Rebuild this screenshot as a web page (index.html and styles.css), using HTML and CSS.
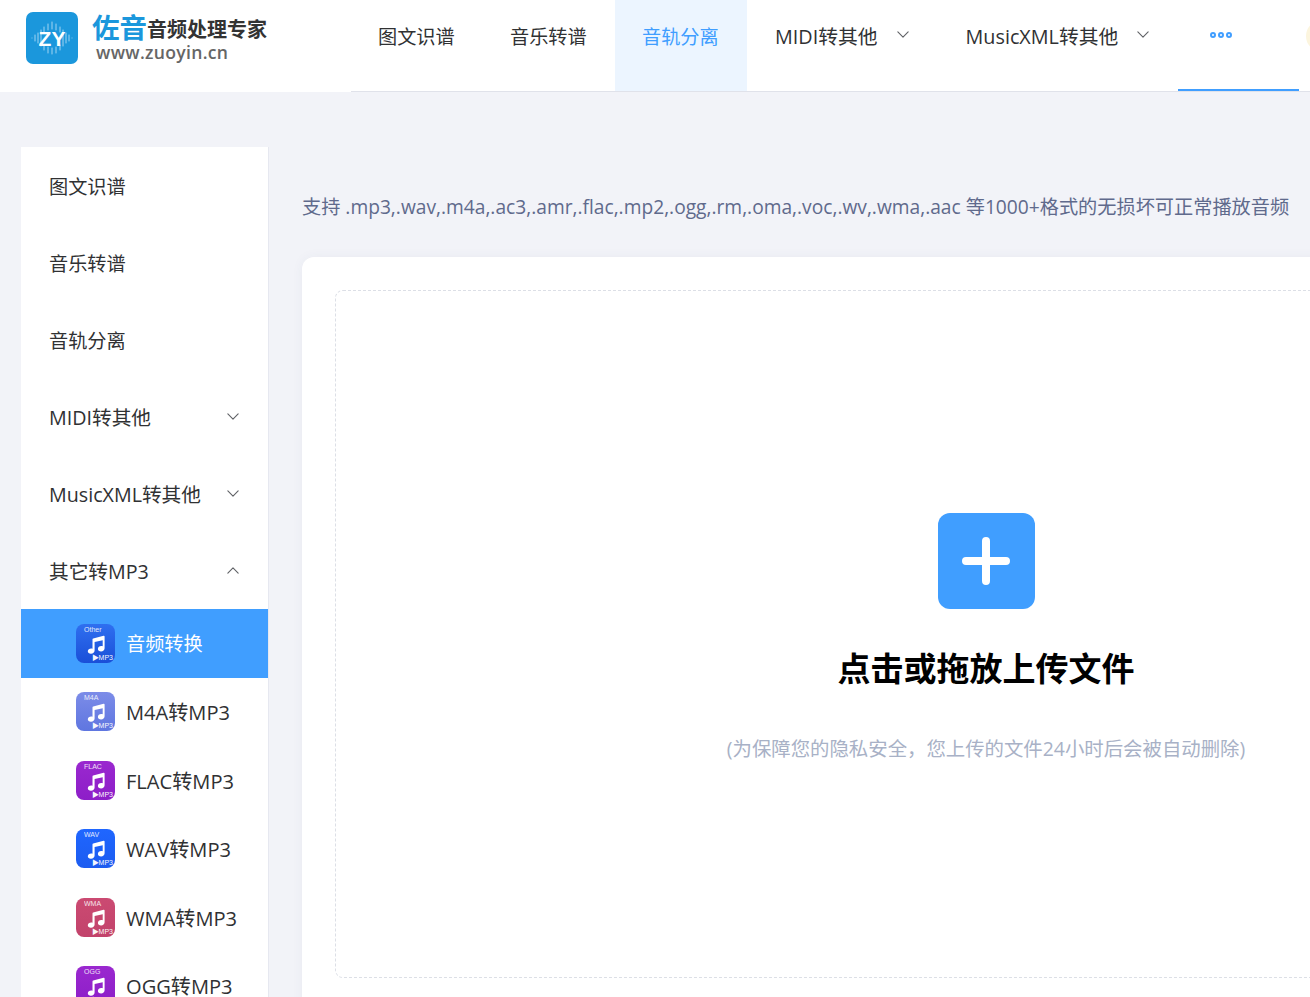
FILE: index.html
```html
<!DOCTYPE html>
<html lang="zh-CN">
<head>
<meta charset="utf-8">
<title>佐音音频处理专家</title>
<link rel="stylesheet" href="styles.css">
</head>
<body>
<svg class="defs" width="0" height="0" aria-hidden="true"><defs>
  <symbol id="note" viewBox="0 0 18 19"><path d="M6.2 3.6 16.600.8c.6-.2 1 .2 1 .8v11.600c0 1.900-1.600 3.200-3.500 3.200s-3.200-1-3.200-2.500 1.500-2.800 3.400-2.800c.5 0 1 .1 1.400.2V5.200L7.600 7.100v8.400c0 1.900-1.600 3.300-3.600 3.300S.8 17.800.8 16.300s1.500-2.800 3.400-2.800c.5 0 1 .1 1.300.2V4.500c0-.4.300-.8.700-.9z"/></symbol>
  <symbol id="chev" viewBox="0 0 14 8"><path d="M1 1l6 6 6-6" fill="none" stroke="currentColor" stroke-width="1.300" stroke-linecap="round" stroke-linejoin="round"/></symbol>
  <symbol id="chev-up" viewBox="0 0 14 8"><path d="M1 7l6-6 6 6" fill="none" stroke="currentColor" stroke-width="1.300" stroke-linecap="round" stroke-linejoin="round"/></symbol>
</defs></svg>

<header class="topbar">
  <a class="brand">
    <span class="brand-mark">
      <svg class="brand-wave" viewBox="0 0 52 52"><path d="M6 26h0M9 23v6M12 21v10M15 18v16M18 15v5M18 33v5M22 12v6M22 35v6M26 10v7M26 36v6M30 12v6M30 35v6M34 15v5M34 33v5M37 18v16M40 21v10M43 23v6M46 26h0" stroke="#cfeaf9" stroke-width="1" stroke-linecap="round" fill="none" opacity=".75"/></svg>
      <span class="brand-zy">ZY</span>
    </span>
    <span class="brand-text">
      <span class="brand-title"><b>佐音</b><span>音频处理专家</span></span>
      <span class="brand-url">www.zuoyin.cn</span>
    </span>
  </a>
  <nav class="topnav">
    <a class="topnav-item">图文识谱</a>
    <a class="topnav-item">音乐转谱</a>
    <a class="topnav-item is-active">音轨分离</a>
    <a class="topnav-item has-sub">MIDI转其他<svg class="chev"><use href="#chev"/></svg></a>
    <a class="topnav-item has-sub">MusicXML转其他<svg class="chev"><use href="#chev"/></svg></a>
    <a class="topnav-more"><i></i><i></i><i></i></a>
    <span class="avatar"></span>
  </nav>
</header>

<div class="layout">
  <aside class="sidebar">
    <a class="side-item">图文识谱</a>
    <a class="side-item">音乐转谱</a>
    <a class="side-item">音轨分离</a>
    <a class="side-item is-mixed">MIDI转其他<svg class="chev"><use href="#chev"/></svg></a>
    <a class="side-item is-mixed">MusicXML转其他<svg class="chev"><use href="#chev"/></svg></a>
    <a class="side-item is-mixed">其它转MP3<svg class="chev"><use href="#chev-up"/></svg></a>
    <a class="sub-item is-active">
      <span class="fmt fmt-other"><em>Other</em><svg class="fmt-note"><use href="#note"/></svg><small>▶MP3</small></span>音频转换
    </a>
    <a class="sub-item is-latin">
      <span class="fmt fmt-m4a"><em>M4A</em><svg class="fmt-note"><use href="#note"/></svg><small>▶MP3</small></span>M4A转MP3
    </a>
    <a class="sub-item is-latin">
      <span class="fmt fmt-flac"><em>FLAC</em><svg class="fmt-note"><use href="#note"/></svg><small>▶MP3</small></span>FLAC转MP3
    </a>
    <a class="sub-item is-latin">
      <span class="fmt fmt-wav"><em>WAV</em><svg class="fmt-note"><use href="#note"/></svg><small>▶MP3</small></span>WAV转MP3
    </a>
    <a class="sub-item is-latin">
      <span class="fmt fmt-wma"><em>WMA</em><svg class="fmt-note"><use href="#note"/></svg><small>▶MP3</small></span>WMA转MP3
    </a>
    <a class="sub-item is-latin">
      <span class="fmt fmt-flac"><em>OGG</em><svg class="fmt-note"><use href="#note"/></svg><small>▶MP3</small></span>OGG转MP3
    </a>
  </aside>

  <main class="content">
    <p class="formats">支持 .mp3,.wav,.m4a,.ac3,.amr,.flac,.mp2,.ogg,.rm,.oma,.voc,.wv,.wma,.aac 等1000+格式的无损坏可正常播放音频</p>
    <section class="card">
      <div class="dropzone">
        <span class="plus"><svg viewBox="0 0 48 48" width="48" height="48"><path d="M4 24h40M24 4v40" stroke="#fff" stroke-width="8" stroke-linecap="round"/></svg></span>
        <h1 class="drop-title">点击或拖放上传文件</h1>
        <p class="drop-note">(为保障您的隐私安全，您上传的文件24小时后会被自动删除)</p>
      </div>
    </section>
  </main>
</div>
</body>
</html>
```

FILE: styles.css
```css
* { box-sizing: border-box; }
html, body { margin: 0; height: 997px; overflow: hidden; }
body {
  width: 1310px;
  background: #f2f3f8;
  font-family: "Open Sans", "Noto Sans CJK SC", sans-serif;
  font-size: 19.200px;
  color: #303133;
}
.defs { position: absolute; }
a { color: inherit; text-decoration: none; }

.topbar {
  display: flex;
  height: 92px;
  background: #fff;
  width: 1310px;
}
.brand { width: 351px; flex: none; display: flex; padding: 12px 0 0 26px; }
.brand-mark {
  position: relative;
  width: 52px; height: 52px;
  border-radius: 7px;
  background: #1b97dc;
  display: flex; align-items: center; justify-content: center;
}
.brand-wave { position: absolute; inset: 0; }
.brand-zy {
  position: relative;
  color: #fff;
  font: 700 21px/1 "Liberation Sans", sans-serif;
}
.brand-text { margin-left: 14px; display: flex; flex-direction: column; }
.brand-title { display: flex; align-items: flex-end; height: 32px; white-space: nowrap; }
.brand-title b { font-size: 27.500px; line-height: 32px; color: #1b97dc; font-weight: 700; }
.brand-title span { font-size: 20px; line-height: 28px; font-weight: 700; color: #333; }
.brand-url { margin: -2px 0 0 4px; font-size: 17.600px; line-height: 20px; color: #666; font-weight: 600; letter-spacing: .3px; }

.topnav {
  flex: 1;
  display: flex;
  height: 92px;
  border-bottom: 1px solid #e0e2ea;
  position: relative;
}
.topnav-item {
  display: flex; align-items: center;
  height: 91px;
  padding: 0 26px 20px 27px;
  width: 132px;
  flex: none;
  white-space: nowrap;
  color: #303133;
}
.topnav-item.is-active { background: #ecf5ff; color: #409eff; }
.topnav-item.has-sub { width: auto; padding-left: 28px; padding-right: 29px; font-size: 19.800px; }
.topnav-item .chev { margin-left: 19px; margin-top: -2px; }
.chev { width: 12px; height: 7px; color: #606266; flex: none; }
.topnav-more {
  width: 121px;
  height: 91px;
  border-bottom: 2px solid #409eff;
  display: flex; gap: 2px;
  padding: 32px 0 0 32px;
  flex: none;
}
.topnav-more i {
  width: 6px; height: 6px;
  border: 2px solid #409eff;
  border-radius: 50%;
}
.avatar {
  position: absolute;
  left: 955px; top: 20px;
  width: 32px; height: 32px;
  border-radius: 50%;
  background: #fcf5de;
}

.layout { display: flex; align-items: flex-start; padding: 55px 0 0 21px; }
.sidebar {
  width: 248px;
  flex: none;
  background: #fff;
  border-right: 1px solid #e6e8f0;
  height: 850px;
  overflow: hidden;
}
.side-item {
  display: flex; align-items: center; justify-content: space-between;
  height: 77px;
  padding: 0 29px 0 28px;
  white-space: nowrap;
}
.side-item.is-mixed { font-size: 19.700px; }
.sub-item {
  display: flex; align-items: center;
  height: 68.500px;
  padding-left: 55px;
  white-space: nowrap;
}
.sub-item.is-latin { font-size: 20.100px; }
.sub-item.is-active { background: #409eff; color: #fff; }

.fmt {
  position: relative;
  width: 39px; height: 39px;
  margin-right: 11px;
  flex: none;
  border-radius: 8px;
  color: #fff;
  font-family: "Liberation Sans", sans-serif;
}
.fmt em { position: absolute; left: 8px; top: 1px; font-size: 7px; line-height: 9px; font-style: normal; opacity: .85; }
.fmt small { position: absolute; right: 2px; bottom: 1px; font-size: 7px; line-height: 9px; opacity: .95; }
.fmt-note { position: absolute; left: 11px; top: 11px; width: 18px; height: 19px; fill: #fff; }
.fmt-other { background: linear-gradient(#2f6ff0, #1a4fd8); }
.fmt-m4a { background: linear-gradient(#7c8ce8, #5f76e0); }
.fmt-flac { background: linear-gradient(#9a28cf, #8d1ec8); }
.fmt-wav { background: linear-gradient(#1f66ff, #1c5cf0); }
.fmt-wma { background: linear-gradient(#cb4a72, #c2436b); }

.content { width: 1368px; flex: none; margin-left: 33px; }
.formats {
  margin: 0;
  padding-top: 46px;
  height: 110px;
  line-height: 27px;
  color: #606a8c;
  white-space: nowrap;
}
.card {
  background: #fff;
  border-radius: 12px;
  padding: 33px;
  height: 760px;
  box-shadow: 0 0 12px rgba(60, 70, 120, .05);
}
.dropzone {
  height: 688px;
  border: 1px dashed #dcdfe6;
  border-radius: 8px;
  display: flex; flex-direction: column; align-items: center;
  padding-top: 222px;
}
.plus {
  width: 97px; height: 96px;
  border-radius: 12px;
  background: #409eff;
  display: flex; align-items: center; justify-content: center;
}
.drop-title {
  margin: 37px 0 0;
  font-size: 33px;
  line-height: 46px;
  font-weight: 700;
  color: #000;
  white-space: nowrap;
}
.drop-note {
  margin: 43px 0 0;
  font-size: 19.400px;
  line-height: 27px;
  color: #a8b1c6;
  white-space: nowrap;
}
```
